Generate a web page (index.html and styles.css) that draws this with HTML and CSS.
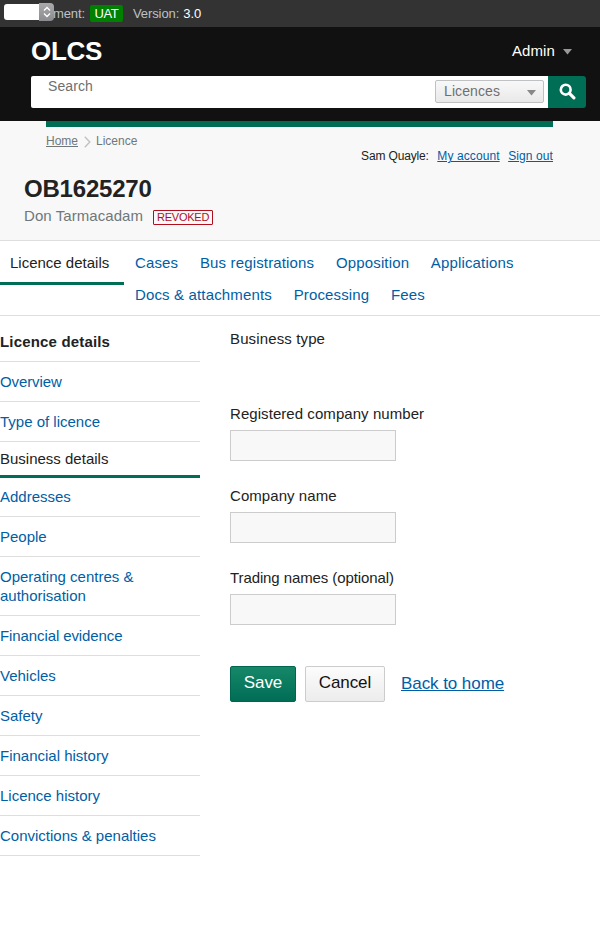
FILE: index.html
```html
<!DOCTYPE html>
<html lang="en">
<head>
<meta charset="utf-8">
<title>OLCS</title>
<link rel="stylesheet" href="styles.css">
</head>
<body>
<div class="topbar">
  <span class="mini-select"><span class="mini-arrows"><svg width="8" height="12" viewBox="0 0 8 12"><path d="M1 4.4 4 1.5 7 4.4M1 7.6l3 2.9 3-2.9" fill="none" stroke="#fff" stroke-width="1.4"/></svg></span></span>
  <span class="env">ment:</span><span class="tag">UAT</span><span class="version">Version:</span><span class="number">3.0</span>
</div>
<header class="header">
  <div class="brand-row"><a class="brand">OLCS</a><a class="admin">Admin <svg class="caret" width="9" height="6" viewBox="0 0 9 6"><path d="M0 0h9L4.500 5.500z" fill="#999"/></svg></a></div>
  <form class="search">
    <div class="search-box"><span class="placeholder">Search</span><span class="picker">Licences<svg width="9" height="6" viewBox="0 0 9 6"><path d="M0 0h9L4.500 5.500z" fill="#888"/></svg></span></div>
    <button class="search-button" type="button" aria-label="Search"><svg width="17" height="17" viewBox="0 0 17 17"><circle cx="6.700" cy="6.700" r="4.900" fill="none" stroke="#fff" stroke-width="2.600"/><path d="m10.200 10.200 4.700 4.600" stroke="#fff" stroke-width="3.200" stroke-linecap="round"/></svg></button>
  </form>
</header>
<section class="page-head">
  <div class="meta">
    <div class="crumbs"><a class="crumb-link">Home</a><svg width="7" height="12" viewBox="0 0 7 12"><path d="M.8.8 5.800 6 .8 11.200" fill="none" stroke="#bfc1c3" stroke-width="1.400"/></svg><span>Licence</span></div>
    <div class="account"><span class="user">Sam Quayle:</span><a class="link">My account</a><a class="link">Sign out</a></div>
  </div>
  <h1 class="title">OB1625270</h1>
  <div class="holder"><span>Don Tarmacadam</span><span class="status">REVOKED</span></div>
</section>
<nav class="tabs">
  <a class="tab-current">Licence details</a>
  <div class="tab-list">
    <a>Cases</a><a>Bus registrations</a><a>Opposition</a><a>Applications</a><a>Docs &amp; attachments</a><a>Processing</a><a>Fees</a>
  </div>
</nav>
<div class="columns">
  <aside class="side">
    <h2 class="side-title">Licence details</h2>
    <a class="side-link tight">Overview</a>
    <a class="side-link">Type of licence</a>
    <a class="side-link current">Business details</a>
    <a class="side-link after-current">Addresses</a>
    <a class="side-link">People</a>
    <a class="side-link">Operating centres &amp; authorisation</a>
    <a class="side-link tight">Financial evidence</a>
    <a class="side-link">Vehicles</a>
    <a class="side-link">Safety</a>
    <a class="side-link">Financial history</a>
    <a class="side-link">Licence history</a>
    <a class="side-link">Convictions &amp; penalties</a>
  </aside>
  <main class="content">
    <div class="type">Business type</div>
    <label class="field"><span class="wide">Registered company number</span><input class="input" type="text"></label>
    <label class="field"><span class="wide">Company name</span><input class="input" type="text"></label>
    <label class="field"><span class="tight">Trading names (optional)</span><input class="input" type="text"></label>
    <div class="actions"><button class="button save" type="button">Save</button><button class="button cancel" type="button">Cancel</button><a class="back">Back to home</a></div>
  </main>
</div>
</body>
</html>
```
FILE: styles.css
```css
* { box-sizing: border-box; }
body { margin: 0; min-height: 948px; background: #fff; color: #222; font: 15px/19px "Liberation Sans", Arial, sans-serif; }
h1, h2 { margin: 0; }
.topbar { position: relative; display: flex; align-items: center; height: 27px; padding-left: 53px; background: #333; color: #bfc1c3; font-size: 13px; letter-spacing: -.1px; }
.mini-select { position: absolute; left: 4px; top: 3px; width: 50px; height: 18px; padding: 1px 0; }
.mini-select::before { content: ""; display: block; height: 16px; width: 40px; border-radius: 3px 0 0 3px; background: #fff; }
.mini-arrows { position: absolute; right: 0; top: 0; display: flex; align-items: center; justify-content: center; width: 15px; height: 18px; border-radius: 0 4px 4px 0; background: linear-gradient(#aaaaad, #8c8c90); }
.env { width: 32px; }
.tag { margin-left: 5px; width: 33px; height: 17px; border-radius: 2px; background: #008000; color: #fff; line-height: 17px; text-align: center; letter-spacing: -.4px; }
.version { margin-left: 10px; }
.number { margin-left: 4px; color: #fff; letter-spacing: 0; }
.header { height: 94px; padding: 0 14px 0 31px; background: #111; color: #fff; }
.brand-row { display: flex; justify-content: space-between; align-items: center; height: 49px; padding: 0 14px 2px 0; }
.brand { font-size: 26px; font-weight: bold; line-height: 30px; letter-spacing: -.3px; }
.admin { display: flex; align-items: center; gap: 8px; letter-spacing: .1px; }
.caret { margin-top: 2px; }
.search { display: flex; height: 32px; }
.search-box { flex: 1; display: flex; justify-content: space-between; padding: 4px 4px 0 17px; border-radius: 2px 0 0 2px; background: #fff; color: #6f6f6f; font-size: 14px; letter-spacing: .1px; }
.placeholder { margin-top: -3px; }
.picker { display: flex; align-items: center; justify-content: space-between; width: 109px; height: 23px; padding: 0 7px 0 8px; border: 1px solid #bfc1c3; border-radius: 2px; background: linear-gradient(#f8f8f8, #e9e9e9); }
.picker svg { margin-top: 2px; }
.search-button { display: flex; align-items: center; justify-content: center; width: 38px; padding: 0 0 2px; border: 0; border-radius: 0 3px 3px 0; background: #006d55; }
.page-head { height: 120px; padding-left: 24px; border-bottom: 1px solid #dedede; background: #f8f8f8; }
.meta { display: flex; justify-content: space-between; height: 53px; margin: 0 47px 0 22px; border-top: 6px solid #006d55; font-size: 12px; }
.crumbs { display: flex; align-items: center; gap: 5.5px; height: 19px; margin-top: 5px; color: #6f777b; }
.crumbs svg { margin-top: 1px; }
.crumb-link, .link, .back { text-decoration: underline; }
.account { display: flex; gap: 8.5px; margin-top: 20px; }
.user { letter-spacing: -.15px; }
.account .link { letter-spacing: .1px; }
.link, .back { color: #005ea5; }
.title { font-size: 24px; line-height: 30px; letter-spacing: -.2px; }
.holder { display: flex; align-items: center; gap: 10px; height: 23px; color: #6f777b; letter-spacing: .07px; }
.status { width: 60px; height: 15px; margin-top: 3px; border: 1px solid #b10e1e; border-radius: 1px; color: #b10e1e; font-size: 11px; line-height: 13px; text-align: center; letter-spacing: -.25px; }
.tabs { display: flex; align-items: flex-start; height: 75px; border-bottom: 1px solid #dedede; }
.tab-current { width: 124px; height: 44px; padding: 12px 10px 0; border-bottom: 3px solid #006d55; }
.tab-list { display: flex; flex-wrap: wrap; column-gap: 21.7px; row-gap: 13px; width: 410px; padding: 12px 0 0 11px; color: #005ea5; letter-spacing: .15px; }
.columns { display: flex; gap: 30px; }
.side { width: 200px; }
.side-title { padding: 16px 0 10px; border-bottom: 1px solid #dedede; font-size: 15px; line-height: 19px; letter-spacing: .17px; }
.side-link { display: block; padding: 10px 0; border-bottom: 1px solid #dedede; color: #005ea5; }
.current { padding: 7px 0; border-bottom: 3px solid #006d55; color: #222; }
.after-current { padding-top: 9px; }
.content { padding-top: 13px; }
.type { height: 75px; letter-spacing: .13px; }
.wide { letter-spacing: .06px; }
.tight { letter-spacing: -.1px; }
.field { display: block; height: 82px; }
.input { display: block; width: 166px; height: 31px; margin: 7px 0 0; border: 1px solid #ccc; border-radius: 0; background: #f8f8f8; }
.actions { display: flex; align-items: center; margin-top: 16px; font-size: 17px; }
.back { padding-bottom: 2px; letter-spacing: -.07px; }
.button { height: 36px; padding: 0 0 2px; border: 1px solid #ccc; border-radius: 2px; font: 17px/20px "Liberation Sans", Arial, sans-serif; letter-spacing: -.1px; }
.save { width: 66px; border-color: #006650; background: linear-gradient(#168868, #006d55); color: #fff; }
.cancel { width: 80px; margin: 0 16px 0 9px; background: linear-gradient(#fcfcfc, #ececec); color: #111; }
```
